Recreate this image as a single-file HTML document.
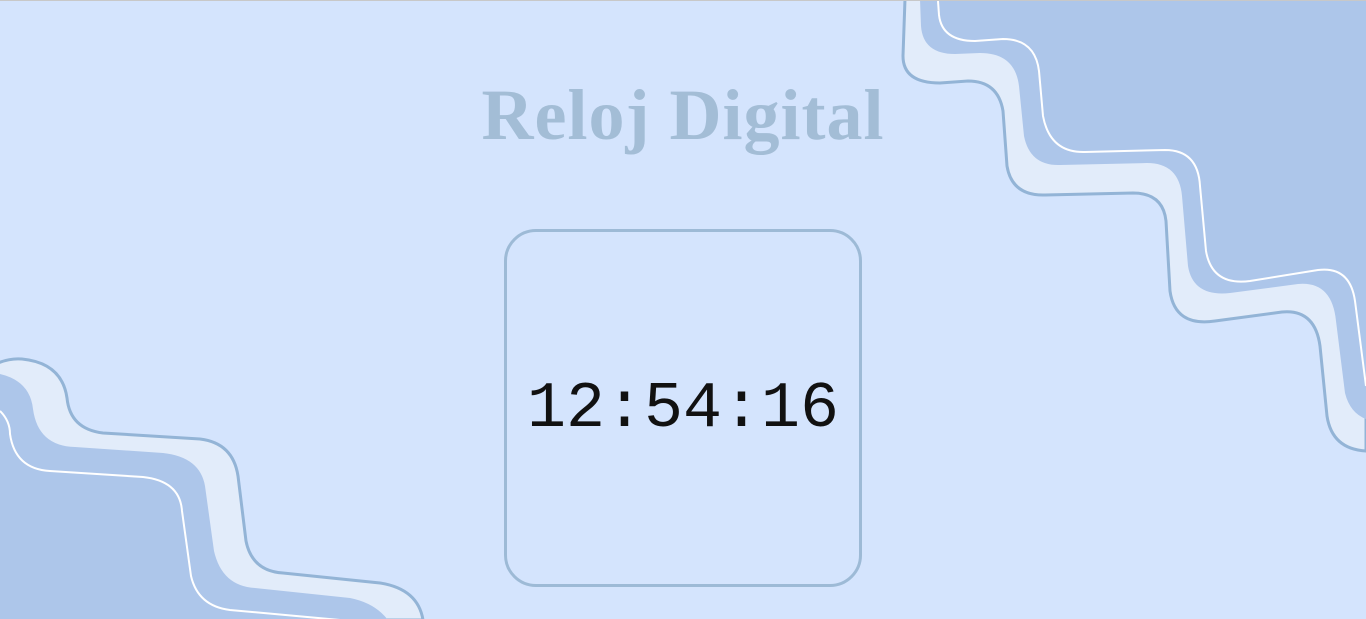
<!DOCTYPE html>
<html><head><meta charset="utf-8"><style>
html,body{margin:0;padding:0;width:1366px;height:619px;overflow:hidden;background:#d4e4fd;}
body{position:relative;border-top:1px solid #c8c8c8;box-sizing:border-box;}
svg{position:absolute;left:0;top:0;}
h1{position:absolute;left:0;width:1366px;top:72px;margin:0;text-align:center;font-family:"Liberation Serif",serif;font-weight:bold;font-size:72px;letter-spacing:1px;color:#a3bdd6;line-height:84px;}
.box{position:absolute;left:504px;top:228px;width:352px;height:352px;border:3px solid #9dbad6;border-radius:32px;}
.time{position:absolute;left:504px;width:358px;top:368px;text-align:center;font-family:"Liberation Mono",monospace;font-size:65px;line-height:80px;color:#111;}
</style></head><body>
<svg width="1366" height="619" viewBox="0 0 1366 619">
<path d="M905,-2 L903,55 Q903,82 940,82 L968,80 Q998,80 1003,110 L1007,165 Q1012,195 1045,194 L1133,192 Q1163,192 1166,220 L1170,290 Q1175,326 1215,320 L1282,311 Q1315,308 1320,345 L1327,415 Q1332,448 1366,450 L1366,-2 Z" fill="#e2ecfa" stroke="#93b4d6" stroke-width="3"/>
<path d="M920,-2 L921,25 Q923,53 955,53 L980,52 Q1015,52 1019,85 L1024,135 Q1030,165 1060,164 L1147,162 Q1179,162 1182,195 L1188,265 Q1193,296 1230,292 L1298,283 Q1332,280 1336,320 L1345,392 Q1350,412 1366,418 L1366,-2 Z" fill="#adc6ea"/>
<path d="M938,0 L939,14 Q942,40 975,40 L1003,38 Q1035,38 1039,70 L1043,115 Q1050,152 1085,151 L1165,149 Q1198,149 1200,185 L1206,250 Q1212,285 1250,280 L1318,269 Q1350,265 1355,300 L1366,385" fill="none" stroke="#fff" stroke-width="2"/>
<path d="M-2,362 Q10,357 22,358 Q62,362 67,397 Q70,428 103,432 L200,438 Q233,442 238,475 L246,540 Q252,570 283,572 L380,582 Q418,588 423,619 L-2,619 Z" fill="#e2ecfa" stroke="#93b4d6" stroke-width="3"/>
<path d="M0,373 Q30,380 33,408 Q38,445 75,446 L163,452 Q200,456 205,485 L214,550 Q222,585 255,587 L350,597 Q375,602 388,619 L0,619 Z" fill="#adc6ea"/>
<path d="M0,410 Q10,420 10,433 Q15,468 50,470 L143,476 Q180,480 182,510 L191,575 Q198,605 230,609 L340,619" fill="none" stroke="#fff" stroke-width="2"/>
</svg>
<h1>Reloj Digital</h1>
<div class="box"></div>
<div class="time">12:54:16</div>
</body></html>
